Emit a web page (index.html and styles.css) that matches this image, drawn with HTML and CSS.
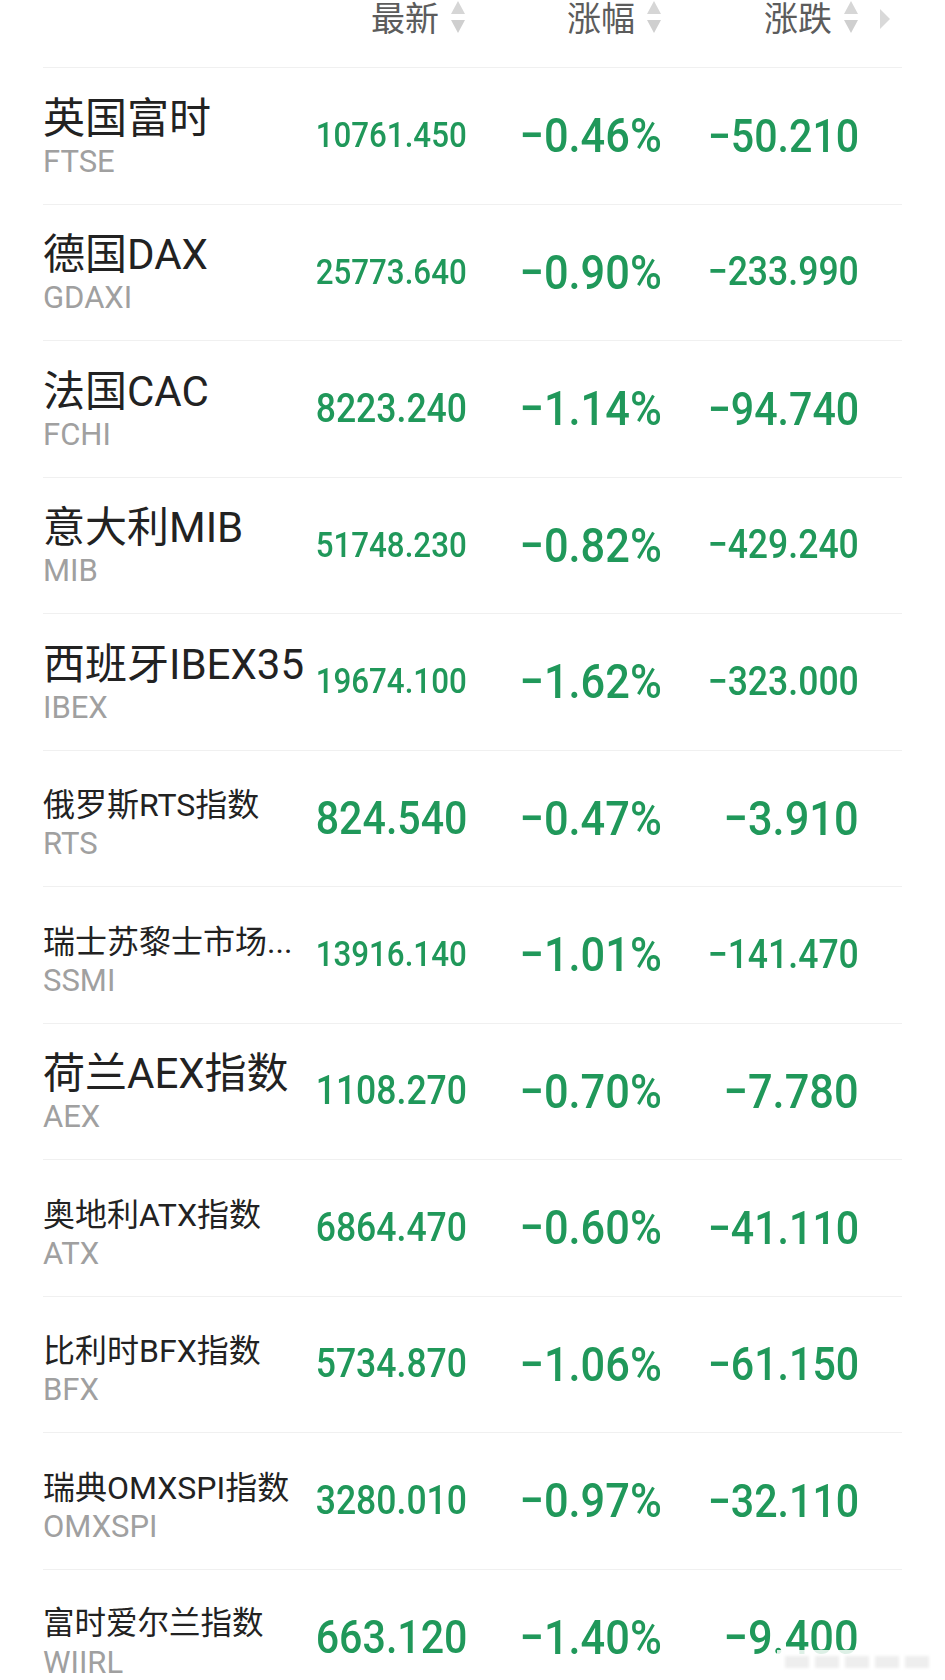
FILE: index.html
```html
<!DOCTYPE html>
<html lang="zh-CN">
<head>
  <meta charset="UTF-8">
  <meta name="viewport" content="width=device-width, initial-scale=1.0">
  <title>欧洲股指</title>
  <link rel="stylesheet" href="styles.css">
</head>
<body>
  <div class="board">
    <div class="head">
      <span></span>
      <div class="col-head">最新
        <svg class="sort" width="16" height="34" viewBox="0 0 16 34"><polygon points="8,1 15,14 1,14" fill="#d6d6d6"/><polygon points="1,20 15,20 8,33" fill="#cfcfcf"/></svg>
      </div>
      <div class="col-head">涨幅
        <svg class="sort" width="16" height="34" viewBox="0 0 16 34"><polygon points="8,1 15,14 1,14" fill="#d6d6d6"/><polygon points="1,20 15,20 8,33" fill="#cfcfcf"/></svg>
      </div>
      <div class="col-head">涨跌
        <svg class="sort" width="16" height="34" viewBox="0 0 16 34"><polygon points="8,1 15,14 1,14" fill="#d6d6d6"/><polygon points="1,20 15,20 8,33" fill="#cfcfcf"/></svg>
      </div>
      <div class="more">
        <svg width="10" height="20" viewBox="0 0 10 20"><polygon points="0,0 10,10 0,20" fill="#d9d9d9"/></svg>
      </div>
    </div>

    <div class="row">
      <div class="name"><div class="cn">英国富时</div><div class="code">FTSE</div></div>
      <div class="val"><span class="num s">10761.450</span></div>
      <div class="val"><span class="num xl">−0.46%</span></div>
      <div class="val"><span class="num l">−50.210</span></div>
    </div>
    <div class="row">
      <div class="name"><div class="cn">德国DAX</div><div class="code">GDAXI</div></div>
      <div class="val"><span class="num s">25773.640</span></div>
      <div class="val"><span class="num xl">−0.90%</span></div>
      <div class="val"><span class="num m">−233.990</span></div>
    </div>
    <div class="row">
      <div class="name"><div class="cn">法国CAC</div><div class="code">FCHI</div></div>
      <div class="val"><span class="num m">8223.240</span></div>
      <div class="val"><span class="num xl">−1.14%</span></div>
      <div class="val"><span class="num l">−94.740</span></div>
    </div>
    <div class="row">
      <div class="name"><div class="cn">意大利MIB</div><div class="code">MIB</div></div>
      <div class="val"><span class="num s">51748.230</span></div>
      <div class="val"><span class="num xl">−0.82%</span></div>
      <div class="val"><span class="num m">−429.240</span></div>
    </div>
    <div class="row">
      <div class="name"><div class="cn">西班牙IBEX35</div><div class="code">IBEX</div></div>
      <div class="val"><span class="num s">19674.100</span></div>
      <div class="val"><span class="num xl">−1.62%</span></div>
      <div class="val"><span class="num m">−323.000</span></div>
    </div>
    <div class="row">
      <div class="name"><div class="cn small">俄罗斯RTS指数</div><div class="code">RTS</div></div>
      <div class="val"><span class="num l">824.540</span></div>
      <div class="val"><span class="num xl">−0.47%</span></div>
      <div class="val"><span class="num xl">−3.910</span></div>
    </div>
    <div class="row">
      <div class="name"><div class="cn small">瑞士苏黎士市场...</div><div class="code">SSMI</div></div>
      <div class="val"><span class="num s">13916.140</span></div>
      <div class="val"><span class="num xl">−1.01%</span></div>
      <div class="val"><span class="num m">−141.470</span></div>
    </div>
    <div class="row">
      <div class="name"><div class="cn">荷兰AEX指数</div><div class="code">AEX</div></div>
      <div class="val"><span class="num m">1108.270</span></div>
      <div class="val"><span class="num xl">−0.70%</span></div>
      <div class="val"><span class="num xl">−7.780</span></div>
    </div>
    <div class="row">
      <div class="name"><div class="cn small">奥地利ATX指数</div><div class="code">ATX</div></div>
      <div class="val"><span class="num m">6864.470</span></div>
      <div class="val"><span class="num xl">−0.60%</span></div>
      <div class="val"><span class="num l">−41.110</span></div>
    </div>
    <div class="row">
      <div class="name"><div class="cn small">比利时BFX指数</div><div class="code">BFX</div></div>
      <div class="val"><span class="num m">5734.870</span></div>
      <div class="val"><span class="num xl">−1.06%</span></div>
      <div class="val"><span class="num l">−61.150</span></div>
    </div>
    <div class="row">
      <div class="name"><div class="cn small">瑞典OMXSPI指数</div><div class="code">OMXSPI</div></div>
      <div class="val"><span class="num m">3280.010</span></div>
      <div class="val"><span class="num xl">−0.97%</span></div>
      <div class="val"><span class="num l">−32.110</span></div>
    </div>
    <div class="row">
      <div class="name"><div class="cn small narrow">富时爱尔兰指数</div><div class="code">WIIRL</div></div>
      <div class="val"><span class="num l">663.120</span></div>
      <div class="val"><span class="num xl">−1.40%</span></div>
      <div class="val"><span class="num xl">−9.400</span></div>
    </div>
  </div>

  <!-- watermark smudge in the corner -->
  <div class="mark"><i></i><i></i><i></i><i></i><i></i></div>
</body>
</html>
```

FILE: styles.css
```css
body {
  margin: 0;
  padding: 0;
  width: 945px;
  height: 1680px;
  overflow: hidden;
  background: #fff;
  font-family: Roboto, "Noto Sans CJK SC", sans-serif;
  position: relative;
}

.board {
  padding: 0 43px;
}

.head,
.row {
  display: grid;
  grid-template-columns: minmax(0, 1fr) 170px 196px 197px 43px;
}

.head {
  height: 67px;
  align-items: start;
}

.col-head {
  display: flex;
  justify-content: flex-end;
  align-items: flex-start;
  gap: 11px;
  font-family: "Noto Sans CJK SC", sans-serif;
  font-size: 34px;
  line-height: 34px;
  color: #5c5c5c;
}

.sort {
  display: block;
}

.more {
  padding: 9px 0 0 21px;
}

.more svg {
  display: block;
}

.row {
  box-sizing: border-box;
  height: 136.5px;
  border-top: 1px solid #f0f0f0;
  align-items: center;
}

.name {
  min-width: 0;
}

.cn {
  padding-top: 3px;
  font-family: Roboto, "Noto Sans CJK SC", sans-serif;
  font-size: 42px;
  line-height: 46px;
  color: #222;
  white-space: nowrap;
}

.cn.small {
  padding-top: 11px;
  font-size: 32px;
  line-height: 38px;
}

.cn.narrow {
  font-size: 31.5px;
}

.code {
  margin-top: 3px;
  font-size: 31px;
  line-height: 34px;
  color: #a0a0a0;
}

.val {
  text-align: right;
  line-height: 1;
  white-space: nowrap;
}

/* condensed digits: Roboto squeezed to the app's narrow figures */
.num {
  display: inline-block;
  font-family: Roboto, sans-serif;
  font-weight: 500;
  color: #20985a;
  transform: scaleX(0.885);
  transform-origin: 100% 50%;
}

.num.xl {
  font-size: 49px;
}

.num.l {
  font-size: 46.5px;
}

.num.m {
  font-size: 40.2px;
}

.num.s {
  font-size: 35.4px;
}

.mark {
  position: absolute;
  left: 777px;
  top: 1650px;
  width: 160px;
  height: 24px;
  background: rgba(255, 255, 255, 0.85);
  display: flex;
  gap: 6px;
  align-items: center;
  padding: 0 8px;
  box-sizing: border-box;
}

.mark i {
  flex: 1;
  height: 12px;
  background: #eeeeee;
  filter: blur(1.5px);
}
```
